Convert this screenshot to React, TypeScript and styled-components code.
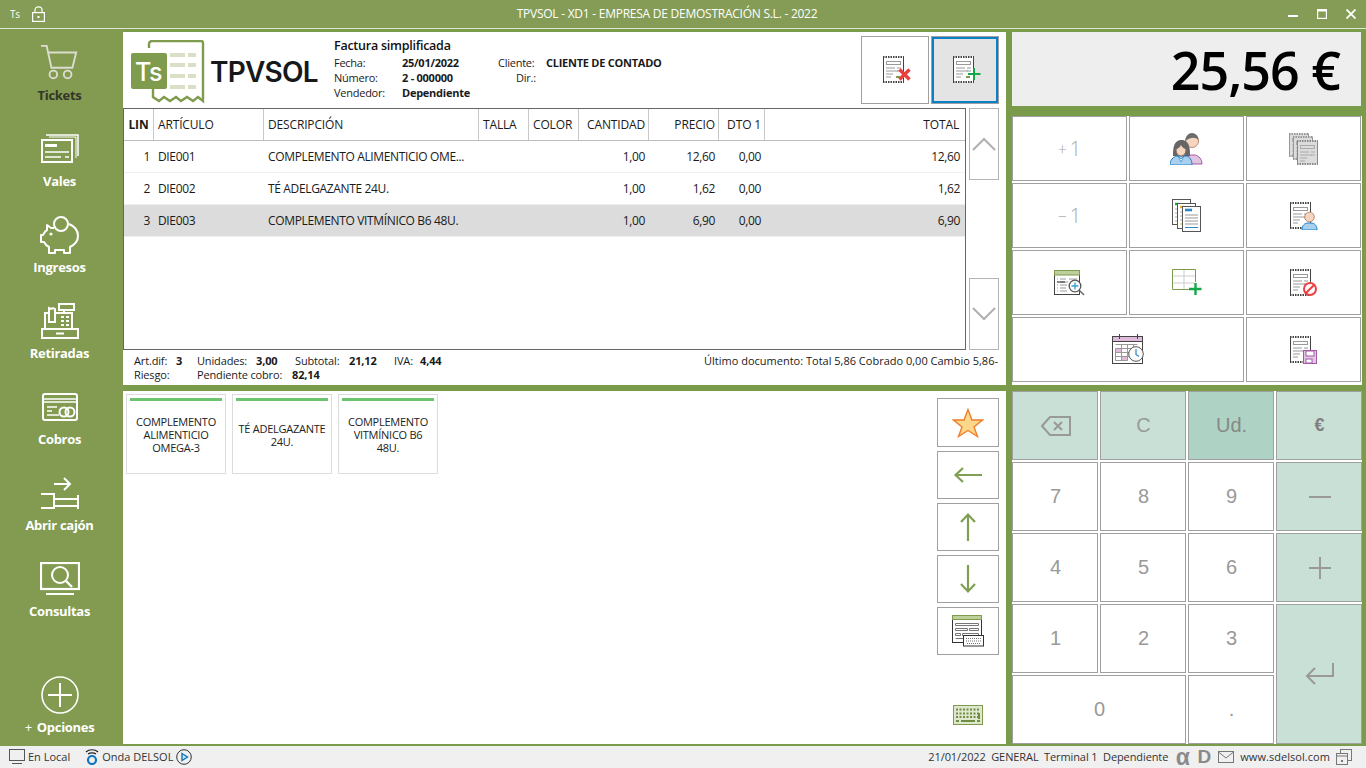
import React from "react";
import styled, { createGlobalStyle } from "styled-components";

const GREEN = "#7f9b4e";
const UI = `"Open Sans", "Noto Sans", sans-serif`;

const Global = createGlobalStyle`
  html, body { margin: 0; padding: 0; height: 100%; overflow: hidden; }
  body { font-family: ${UI}; font-size: 12px; letter-spacing: -0.35px; color: #1a1a1a; }
  * { box-sizing: border-box; }
`;

const Window = styled.div`
  width: 1366px; height: 768px; display: flex; flex-direction: column; background: #7a9b49;
`;
const TitleBar = styled.header`
  height: 29px; flex: none; display: flex; align-items: center; background: #849c55;
  border-bottom: 1px solid #dfe5d3; padding-bottom: 1px; color: #fff;
`;
const TitleLeft = styled.div`
  width: 50px; flex: none; display: flex; align-items: center; gap: 12px; padding-left: 10px;
  font-size: 10px;
`;
const TitleText = styled.div`flex: 1; text-align: center; font-size: 12px; letter-spacing: -0.25px;`;
const TitleRight = styled.div`
  width: 82px; flex: none; display: flex; align-items: center; gap: 19px; padding-left: 4px;
`;
const Body = styled.div`
  flex: 1; min-height: 0; display: grid; grid-template-columns: 123px 883px 356px;
  padding-right: 4px; background: #7a9b49;
`;
const Sidebar = styled.nav`
  display: flex; flex-direction: column; gap: 22px; padding: 9px 4px 12px 0; background: #829b50;
`;
const NavItem = styled.div<{ $last?: boolean }>`
  height: 64px; display: flex; flex-direction: column; align-items: center; flex: none;
  margin-top: ${p => (p.$last ? "auto" : "0")};
`;
const NavIcon = styled.div`height: 50px; display: flex; align-items: center; justify-content: center;`;
const NavLabel = styled.div<{ $active?: boolean }>`
  height: 14px; line-height: 14px; font-size: 13px; font-weight: 700; white-space: nowrap; letter-spacing: -0.3px;
  color: ${p => (p.$active ? "#33362a" : "#fff")};
`;
const PlusSmall = styled.span`font-weight: 400; margin-right: 5px;`;

const Center = styled.main`display: flex; flex-direction: column; gap: 6px; min-width: 0; padding: 3px 0 2px;`;
const TopPanel = styled.section`height: 353px; flex: none; background: #fff; display: flex; flex-direction: column;`;
const Header = styled.div`height: 76px; flex: none; display: flex; padding-left: 8px;`;
const LogoBox = styled.div`
  width: 186px; height: 64px; margin-top: 8px; flex: none; display: flex; align-items: center; position: relative;
`;
const LogoText = styled.span`
  position: absolute; left: 79px; top: 15px; font-family: Inter, sans-serif; font-weight: 600;
  font-size: 28px; line-height: 34px; letter-spacing: -0.8px; color: #17181a;
`;
const Info = styled.div`margin-left: 17px; padding-top: 6px; width: 380px;`;
const InfoTitle = styled.div`font-size: 12.5px; line-height: 16px; font-weight: 600; color: #111; margin-bottom: 1px; letter-spacing: -0.25px;`;
const InfoGrid = styled.div`
  display: grid; grid-template-columns: 68px 96px 48px 1fr; grid-auto-rows: 15px; font-size: 11px; line-height: 15px;
  letter-spacing: -0.25px;
`;
const InfoValue = styled.span`font-weight: 700;`;
const InfoDir = styled.span`padding-left: 18px;`;
const DocButtons = styled.div`margin-left: auto; display: flex; gap: 2px; padding: 4px 7px 0 0;`;
const DocButton = styled.button<{ $on?: boolean }>`
  width: 68px; height: 68px; padding: 0; display: flex; align-items: center; justify-content: center;
  background: ${p => (p.$on ? "#e4e4e4" : "#fff")}; border: 1px solid #a0a0a0;
  box-shadow: ${p => (p.$on ? "inset 0 0 0 2px #0a80c6" : "none")};
`;
const GridRow = styled.div`height: 242px; flex: none; display: flex;`;
const Table = styled.div`width: 843px; flex: none; border: 1px solid #666; display: flex; flex-direction: column;`;
const COLS = "30px 110px 215px 50px 50px 70px 70px 46px 1fr";
const THead = styled.div`
  display: grid; grid-template-columns: ${COLS}; height: 32px; flex: none; border-bottom: 1px solid #bdbdbd;
`;
const TH = styled.div<{ $right?: boolean; $bold?: boolean; $center?: boolean }>`
  border-right: 1px solid #c8c8c8; line-height: 31px; font-size: 12px; white-space: nowrap;
  padding: ${p => (p.$right ? "0 3px 0 0" : p.$center ? "0" : "0 0 0 4px")};
  text-align: ${p => (p.$right ? "right" : p.$center ? "center" : "left")};
  font-weight: ${p => (p.$bold ? 700 : 400)};
  letter-spacing: -0.15px;
  &:last-child { border-right: 0; padding-right: 6px; }
`;
const TRow = styled.div<{ $sel?: boolean }>`
  display: grid; grid-template-columns: ${COLS}; height: 32px; flex: none; border-bottom: 1px solid #efefef;
  background: ${p => (p.$sel ? "#dcdcdc" : "#fff")};
`;
const TD = styled.div<{ $right?: boolean }>`
  line-height: 31px; font-size: 12px; white-space: nowrap; overflow: hidden;
  padding: ${p => (p.$right ? "0 4px 0 0" : "0 0 0 4px")};
  text-align: ${p => (p.$right ? "right" : "left")};
  &:last-child { padding-right: 5px; }
`;
const ScrollCol = styled.div`
  width: 30px; margin-left: 3px; display: flex; flex-direction: column; justify-content: space-between;
`;
const ScrollBtn = styled.button`
  width: 30px; height: 72px; padding: 0; background: #fff; border: 1px solid #b4b4b4;
  display: flex; align-items: center; justify-content: center;
`;
const Foot = styled.div`flex: 1; position: relative; display: flex; padding: 4px 8px 0 11px; font-size: 11px; line-height: 14px; letter-spacing: -0.15px;`;
const FootStats = styled.div`display: flex; flex-direction: column;`;
const FootRow = styled.div`display: flex;`;
const Stat = styled.div<{ $w: number }>`width: ${p => p.$w}px; display: flex; white-space: nowrap;`;
const StatLabel = styled.span<{ $w: number }>`width: ${p => p.$w}px; flex: none;`;
const StatValue = styled.span`font-weight: 700;`;
const LastDoc = styled.div`margin-left: auto; white-space: nowrap; letter-spacing: 0;`;

const BottomPanel = styled.section`height: 353px; flex: none; background: #fff; display: flex;`;
const Cards = styled.div`flex: 1; display: flex; gap: 6px; padding: 3px 0 0 3px; align-items: flex-start;`;
const Card = styled.div`
  width: 100px; height: 80px; border: 1px solid #dcdcdc; padding: 3px; display: flex; flex-direction: column;
`;
const CardBar = styled.div`height: 3px; background: #6cc46f; flex: none;`;
const CardText = styled.div`
  flex: 1; display: flex; align-items: center; justify-content: center; text-align: center;
  font-size: 11px; line-height: 13px; padding-bottom: 2px; color: #222; letter-spacing: -0.25px;
`;
const Tools = styled.div`
  width: 62px; margin-right: 7px; flex: none; padding: 7px 0 19px; display: flex; flex-direction: column; gap: 4px; align-items: center;
`;
const ToolBtn = styled.button<{ $tall?: boolean }>`
  width: 62px; height: ${p => (p.$tall ? 49 : 48)}px; flex: none; padding: 0; background: #fff; border: 1px solid #a0a0a0;
  display: flex; align-items: center; justify-content: center;
`;
const KeyIcon = styled.div`margin-top: auto; display: flex;`;

const RightCol = styled.aside`display: flex; flex-direction: column; margin-left: 6px; padding: 3px 0 2px;`;
const Amount = styled.div`
  height: 74px; background: #eee; flex: none; width: 349px; text-align: right; padding-right: 21px;
  font-size: 52px; line-height: 76px; color: #000; font-weight: 600; letter-spacing: -1px;
`;
const Actions = styled.div`
  margin-top: 10px; height: 269px; background: #fff; display: grid; grid-template-columns: repeat(3, 115px);
  grid-auto-rows: 65px; gap: 2px; flex: none; align-content: start;
`;
const ActionBtn = styled.button<{ $span?: number }>`
  grid-column: span ${p => p.$span ?? 1}; padding: 0; background: #fff; border: 1px solid #a0a0a0;
  display: flex; align-items: center; justify-content: center;
`;
const ActionText = styled.span`
  font-family: ${UI}; font-size: 20px; line-height: 20px; color: #a8a8a8; letter-spacing: 0; font-weight: 300;
  display: flex; align-items: center;
`;
const ActionSign = styled.span`font-size: 16px; margin-right: 3px;`;
const Numpad = styled.div`
  margin-top: 6px; height: 353px; background: #fff; display: grid; grid-template-columns: repeat(4, 86px);
  grid-template-rows: repeat(5, 69px); gap: 2px; flex: none;
`;
const Key = styled.button<{ $tone?: "soft" | "strong"; $col?: number; $row?: number; $size?: number; $dark?: boolean }>`
  grid-column: span ${p => p.$col ?? 1}; grid-row: span ${p => p.$row ?? 1}; padding: 0 0 0 1px;
  border: 1px solid #a0a0a0; color: ${p => (p.$dark ? "#808080" : p.$tone === "strong" ? "#888" : "#999")};
  font-family: "Liberation Sans", Arial, sans-serif;
  font-size: ${p => p.$size ?? 20}px; font-weight: ${p => (p.$dark ? 700 : 400)};
  display: flex; align-items: center; justify-content: center;
  background: ${p => (p.$tone === "soft" ? "#c8e0d6" : p.$tone === "strong" ? "#aed3c4" : "#fff")};
`;
const StatusBar = styled.footer`
  height: 22px; flex: none; background: #f0f0f0; display: flex; align-items: center; font-size: 11px; color: #333;
  padding: 0 14px 1px 9px; letter-spacing: 0;
`;
const StatusGroup = styled.div<{ $gap?: number }>`display: flex; align-items: center; gap: ${p => p.$gap ?? 3}px; white-space: nowrap;`;
const StatusRight = styled(StatusGroup)`margin-left: auto;`;
const StatusDetails = styled.span`letter-spacing: -0.1px; margin-right: 1px;`;
const StatusLink = styled.span`letter-spacing: 0.05px;`;
const StatusSpacer = styled.span`width: 9px;`;
const Brand = styled.span<{ $wide?: boolean }>`
  font-weight: 700; font-size: ${p => (p.$wide ? 23 : 19)}px; line-height: 16px; color: #8a8a8a;
  width: ${p => (p.$wide ? 15 : 16)}px; text-align: center;
  font-family: "Liberation Sans", sans-serif;
`;

/* ---------- icons ---------- */
const W = "#fff";

const Cart = () => (
  <svg width="40" height="40" viewBox="0 0 42 42" fill="none" stroke="#dcdccf" strokeWidth="2">
    <path d="M1 3h6l5 23h22l4-16H9" />
    <circle cx="14" cy="33" r="4" />
    <circle cx="29" cy="33" r="4" />
  </svg>
);
const Vouchers = () => (
  <svg width="38" height="30" viewBox="0 0 38 30" fill="none" stroke={W} strokeWidth="2">
    <path d="M5 1h32v21" strokeWidth="1.5" />
    <path d="M8 3h27v21" strokeWidth="1" />
    <rect x="1" y="6" width="30" height="22" />
    <path d="M4 10h12v3H4z" fill={W} stroke="none" />
    <path d="M4 18h24M4 23h16M24 23h4" strokeWidth="1.5" />
  </svg>
);
const Piggy = () => (
  <svg width="40" height="40" viewBox="0 0 40 40" fill="none" stroke={W} strokeWidth="2" strokeLinejoin="round">
    <circle cx="21" cy="9" r="7" />
    <path d="M14 13H11L7 10v5c-2 1-3 3-4 5H1v7h3c1 2 3 4 5 5v6h6v-3h9v3h6v-6c4-2 8-6 8-11 0-6-4-10-9-12" />
    <circle cx="11" cy="19" r="1.6" fill={W} stroke="none" />
  </svg>
);
const Register = () => (
  <svg width="38" height="38" viewBox="0 0 38 38" fill="none" stroke={W} strokeWidth="2">
    <rect x="1" y="27" width="36" height="9" />
    <path d="M15 31.5h8" />
    <path d="M4 27V11h4M14 11h17v16" />
    <path d="M8 20V6l2 1 2-1 2 1v13z" />
    <rect x="18" y="2" width="15" height="6" />
    <path d="M23 8v3" />
    <path d="M20 15h3M25 15h3M20 19h3M25 19h3M20 23h3M25 23h3" strokeWidth="2" />
  </svg>
);
const CreditCard = () => (
  <svg width="36" height="28" viewBox="0 0 36 28" fill="none" stroke={W} strokeWidth="2">
    <rect x="1" y="1" width="34" height="26" rx="2" />
    <path d="M1 6h34M1 9h34" strokeWidth="1.4" />
    <path d="M5 14h10M5 18h5M5 22h12" strokeWidth="1.5" />
    <circle cx="22" cy="19" r="4.5" />
    <circle cx="28" cy="19" r="4.5" />
  </svg>
);
const Drawer = () => (
  <svg width="38" height="34" viewBox="0 0 38 34" fill="none" stroke={W} strokeWidth="2">
    <path d="M13 8h16M23 2l6 6-6 6" />
    <path d="M0 18h13v14H0" />
    <path d="M13 23h23M13 30h23M37 19v14" />
  </svg>
);
const Monitor = () => (
  <svg width="40" height="34" viewBox="0 0 40 34" fill="none" stroke={W} strokeWidth="2">
    <rect x="1" y="1" width="38" height="26" strokeWidth="2.2" />
    <circle cx="20" cy="13" r="8" />
    <path d="M26 19l6 6" strokeWidth="2.4" />
    <path d="M6 32h28" />
  </svg>
);
const PlusCircle = () => (
  <svg width="38" height="38" viewBox="0 0 38 38" fill="none" stroke={W} strokeWidth="1.6">
    <circle cx="19" cy="19" r="18" />
    <path d="M19 7v24M7 19h24" strokeWidth="2" />
  </svg>
);

const Logo = () => (
  <svg width="74" height="64" viewBox="0 0 74 64">
    <path d="M18 8V4a3 3 0 0 1 3-3h49a2 2 0 0 1 2 2v58l-5-4-5 4-6-4-6 4-5-4-6 4-6-4-5 4-6-4V48"
      fill="#fff" stroke={GREEN} strokeWidth="2.4" />
    <g fill="#d9e0c5">
      <rect x="39" y="13" width="15" height="4" /><rect x="57" y="13" width="8" height="4" />
      <rect x="39" y="23" width="15" height="4" /><rect x="57" y="23" width="8" height="4" />
      <rect x="39" y="34" width="15" height="4" /><rect x="57" y="34" width="8" height="4" />
      <rect x="39" y="45" width="15" height="4" /><rect x="57" y="45" width="8" height="4" />
    </g>
    <rect x="0" y="13" width="36" height="36" rx="2" fill={GREEN} />
    <text x="17.500" y="41" textAnchor="middle" fill="#fff" fontFamily="Inter, sans-serif" fontWeight="500" fontSize="25">Ts</text>
  </svg>
);

const Lock = () => (
  <svg width="13" height="16" viewBox="0 0 13 16" fill="none" stroke={W} strokeWidth="1.2">
    <rect x="0.6" y="6.6" width="11.8" height="8.8" />
    <path d="M3 6.5V3.8C3 2 4.5 0.8 6.500 0.8S10 2 10 3.800V6.500" />
    <rect x="5.500" y="10" width="2" height="2" fill={W} stroke="none" />
  </svg>
);

/* Receipt sheet, shared by many buttons */
const Sheet = ({ x = 0, y = 0, w = 21, h = 27, fill = "#fff", stroke = "#444", ink = "#999" }:
  { x?: number; y?: number; w?: number; h?: number; fill?: string; stroke?: string; ink?: string }) => (
  <g transform={`translate(${x} ${y})`}>
    <rect x="0.500" y="0.500" width={w - 1} height={h - 1} fill={fill} />
    <path d={`M0.500 0.500V${h - 0.5}M${w - 0.5} 0.500V${h - 0.5}`} stroke={stroke} strokeWidth="1" />
    <path d={`M0 1H${w}M0 ${h - 1}H${w}`} stroke={stroke} strokeWidth="2" strokeDasharray="1.500 1" />
    <rect x="3.500" y="5.500" width={w - 7} height="3" fill="none" stroke={ink} />
    <path d={`M3 12H${w - 9}M3 15H${w - 6}M3 18H${w - 11}M3 21H${w - 13}`} stroke={ink} strokeWidth="1" />
    <path d={`M${w - 7} 12H${w - 3}M${w - 7} 15H${w - 3}`} stroke={ink} strokeWidth="1" />
  </g>
);

const ReceiptCancel = () => (
  <svg width="32" height="28" viewBox="-4 0 32 28">
    <Sheet />
    <path d="M13 21h4" stroke={GREEN} strokeWidth="2" />
    <path d="M16.500 13.500l10 10M26.500 13.500l-10 10" stroke="#e8403e" strokeWidth="3.400" />
  </svg>
);
const ReceiptAdd = () => (
  <svg width="32" height="28" viewBox="-4 0 32 28">
    <Sheet />
    <path d="M13 21h4" stroke={GREEN} strokeWidth="2" />
    <path d="M21 12v12M15 18h12.500" stroke="#13a84a" strokeWidth="2" />
  </svg>
);
const People = () => (
  <svg width="34" height="33" viewBox="0 0 34 33">
    <path d="M15 32c0-5 3-8 6-9h4c4 1 7 4 7 9z" fill="#e0c4e0" stroke="#a45aa8" />
    <circle cx="22" cy="9" r="6.500" fill="#f5d5bf" stroke="#bb8a70" />
    <path d="M15.500 9c0-5 3-8 6.500-8s6.500 3 6.500 7c-3-3-8-3-13 1z" fill="#6b6b6b" />
    <path d="M3 24c0-6 0-16 8.500-16S20 18 20 24z" fill="#666" />
    <path d="M0 33c0-5 3-8 7-9h9c4 1 6 4 6 9z" fill="#a9d1ef" stroke="#1f81c4" />
    <path d="M8 24l3 3 3-3-3 6z" fill="#fff" stroke="#1f81c4" strokeWidth=".7" />
    <ellipse cx="11" cy="18" rx="5" ry="6" fill="#f5d5bf" stroke="#8a6a58" />
    <path d="M6 17c2 0 4-2 5-4 1 2 3 4 5 4l0-4-5-3-5 3z" fill="#666" />
  </svg>
);
const StackedReceipts = () => (
  <svg width="30" height="32" viewBox="0 0 30 32">
    <Sheet w={20} h={24} fill="#dcdcdc" stroke="#999" ink="#aaa" />
    <Sheet x={4} y={3} w={20} h={24} fill="#dcdcdc" stroke="#999" ink="#aaa" />
    <Sheet x={8} y={7} w={21} h={25} fill="#dcdcdc" stroke="#888" ink="#aaa" />
  </svg>
);
const Documents = () => (
  <svg width="29" height="33" viewBox="0 0 29 33">
    <rect x=".5" y=".5" width="18" height="25" fill="#fff" stroke="#555" />
    <path d="M3 5h4" stroke="#1fa04a" strokeWidth="2.400" />
    <path d="M3 10h3M3 14h3M3 18h3M3 22h3" stroke="#aaa" />
    <rect x="5.500" y="4.500" width="18" height="25" fill="#fff" stroke="#555" />
    <path d="M8 8h4" stroke="#f0a820" strokeWidth="2.400" />
    <path d="M8 13h2M8 17h2M8 21h2" stroke="#aaa" /><path d="M8 25h2" stroke="#f0a820" />
    <rect x="10.500" y="7.500" width="18" height="25" fill="#fff" stroke="#555" />
    <path d="M13 11h7" stroke="#2a86c8" strokeWidth="2.600" />
    <path d="M13 16h13M13 19h13M13 22h13M13 25h13" stroke="#999" />
    <path d="M13 28.500h13" stroke="#2a86c8" />
  </svg>
);
const ReceiptUser = () => (
  <svg width="28" height="28" viewBox="0 0 28 28">
    <Sheet />
    <path d="M12 28c0-5 3-7 6-7h3c3 0 6 2 6 7z" fill="#a9d1ef" stroke="#1f81c4" />
    <circle cx="19.500" cy="15" r="4.800" fill="#f5d5bf" stroke="#bb8a70" />
  </svg>
);
const TableSearch = () => (
  <svg width="31" height="26" viewBox="0 0 31 26" fill="none">
    <rect x=".5" y=".5" width="25" height="24" fill="#fff" stroke="#444" />
    <rect x=".5" y=".5" width="25" height="4.500" fill="#bdd09b" stroke={GREEN} />
    <path d="M3 9h1M6 9h6M15 9h8M3 12h1M6 12h8M3 15h1M6 15h7M3 18h1M6 18h6M3 21h1M6 21h7" stroke="#999" />
    <path d="M3 12h8" stroke="#222" />
    <circle cx="21" cy="16" r="5.800" fill="#fff" stroke="#555" strokeWidth="1.300" />
    <path d="M21 12.500v7M17.500 16h7" stroke="#3c9fd8" strokeWidth="1.400" />
    <path d="M25.500 20.500l4.500 4.500" stroke="#666" strokeWidth="1.400" />
  </svg>
);
const TableAdd = () => (
  <svg width="30" height="27" viewBox="0 0 30 27" fill="none">
    <path d="M23.500 13V.5H.5v20H17" stroke={GREEN} />
    <path d="M1 7h22M1 14h22M12 1v19" stroke="#ccc" />
    <path d="M23.500 14v12M17 20h12.500" stroke="#13a84a" strokeWidth="2.400" />
  </svg>
);
const ReceiptBlocked = () => (
  <svg width="28" height="28" viewBox="0 0 28 28">
    <Sheet />
    <circle cx="20" cy="20" r="6" fill="#fff" stroke="#ee3f42" strokeWidth="2" />
    <path d="M16 24l8-8" stroke="#ee3f42" strokeWidth="2" />
  </svg>
);
const ReceiptSave = () => (
  <svg width="28" height="28" viewBox="0 0 28 28">
    <Sheet />
    <rect x="13.500" y="14.500" width="13" height="13" fill="#e3c8e3" stroke="#a45aa8" />
    <rect x="16" y="15" width="8" height="5" fill="#fff" stroke="#a45aa8" />
    <rect x="16" y="23" width="6" height="4" fill="#fff" stroke="#a45aa8" />
  </svg>
);
const CalendarClock = () => (
  <svg width="32" height="31" viewBox="0 0 32 31" fill="none">
    <rect x=".5" y="2.500" width="30" height="27" fill="#fff" stroke="#444" />
    <rect x=".5" y="2.500" width="30" height="5" fill="#dfbcdc" stroke="#444" />
    <path d="M7.500 0v5M25.500 0v5" stroke="#444" />
    <rect x="3.500" y="14.500" width="6" height="4" fill="#dfbcdc" />
    <rect x="9.500" y="22.500" width="6" height="4" fill="#dfbcdc" />
    <path d="M3.500 10.500h22M3.500 14.500h22M3.500 18.500h18M3.500 22.500h18M3.500 26.500h12M3.500 14.500v12M9.500 10.500v16M15.500 10.500v16M21.500 10.500v6" stroke="#999" />
    <circle cx="24" cy="20" r="7.300" fill="#fff" stroke="#555" />
    <path d="M24 15v5.500l3 2" stroke="#2a86c8" strokeWidth="1.200" />
  </svg>
);

const Star = () => (
  <svg width="32" height="30" viewBox="0 0 32 30">
    <path d="M16 1.500l4 10.500h10.500l-8.500 7 3.500 9.500-9.500-6-9.500 6 3.500-9.500-8.500-7H12z" fill="#fbd78a" stroke="#ee7d2d" strokeWidth="1.400" />
  </svg>
);
const ArrowLeft = () => (
  <svg width="30" height="18" viewBox="0 0 30 18" fill="none" stroke="#7fa053" strokeWidth="2.200">
    <path d="M29 9H3M10 2L2.500 9l7.500 7" />
  </svg>
);
const ArrowUp = () => (
  <svg width="18" height="30" viewBox="0 0 18 30" fill="none" stroke="#7fa053" strokeWidth="2.200">
    <path d="M9 29V3M2 10l7-7.500L16 10" />
  </svg>
);
const ArrowDown = () => (
  <svg width="18" height="30" viewBox="0 0 18 30" fill="none" stroke="#7fa053" strokeWidth="2.200">
    <path d="M9 1v26M2 20l7 7.500 7-7.500" />
  </svg>
);
const FormKeyboard = () => (
  <svg width="32" height="32" viewBox="0 0 32 32" fill="none">
    <rect x=".5" y=".5" width="29" height="27" fill="#fff" stroke="#333" />
    <rect x=".5" y=".5" width="29" height="4" fill="#bdd09b" stroke={GREEN} />
    <path d="M3.500 8.500h23v2h-23zM3.500 13.500h12v2h-12zM17.500 13.500h9v2h-9zM3.500 18.500h5v2h-5zM10.500 18.500h16v2h-16zM3.500 23.500h8" stroke="#777" />
    <rect x="11.500" y="20.500" width="20" height="10.500" fill="#fff" stroke="#333" />
    <path d="M14 23.500h15M14 26h15M15 28.500h13" stroke="#777" strokeDasharray="1 1" />
  </svg>
);
const GreenKeyboard = () => (
  <svg width="30" height="20" viewBox="0 0 30 20">
    <rect x=".5" y=".5" width="29" height="19" fill="#dfe8cd" stroke={GREEN} />
    <path d="M3 4.500h24M3 8.500h24M3 12h22" stroke="#6f8d44" strokeWidth="2" strokeDasharray="2 1.500" />
    <path d="M8 16h14M3 16h3M24 16h3M26 8v6" stroke="#6f8d44" strokeWidth="2" />
  </svg>
);
const Chevron = ({ up }: { up?: boolean }) => (
  <svg width="24" height="14" viewBox="0 0 24 14" fill="none" stroke="#b0b0b0" strokeWidth="2">
    <path d={up ? "M1 13L12 2l11 11" : "M1 1l11 11L23 1"} />
  </svg>
);
const Backspace = () => (
  <svg width="30" height="20" viewBox="0 0 30 20" fill="none" stroke="#999" strokeWidth="2">
    <path d="M29 1H9L1 10l8 9h20z" />
    <path d="M13 6l8 8M21 6l-8 8" />
  </svg>
);
const Enter = () => (
  <svg width="30" height="22" viewBox="0 0 30 22" fill="none" stroke="#999" strokeWidth="2">
    <path d="M28 0v13H2M10 5l-8 8 8 8" />
  </svg>
);
const Line = ({ plus }: { plus?: boolean }) => (
  <svg width="22" height="22" viewBox="0 0 22 22" fill="none" stroke="#999" strokeWidth="2">
    <path d={plus ? "M0 11h22M11 0v22" : "M0 11h22"} />
  </svg>
);
const ScreenSmall = () => (
  <svg width="16" height="15" viewBox="0 0 16 15" fill="none" stroke="#555">
    <rect x=".5" y=".5" width="15" height="11" />
    <path d="M3 14.500h10" />
  </svg>
);
const Wave = () => (
  <svg width="14" height="17" viewBox="0 0 14 17" fill="none">
    <path d="M1 4c3-3 9-3 12 0M3 6c2-1.500 6-1.500 8 0" stroke="#222" strokeWidth="1.200" />
    <circle cx="7" cy="12" r="4" stroke="#1274bb" strokeWidth="2.200" />
  </svg>
);
const Play = () => (
  <svg width="16" height="16" viewBox="0 0 16 16" fill="none">
    <circle cx="8" cy="8" r="7.300" stroke="#333" />
    <path d="M6 4.500L11.500 8 6 11.500z" stroke="#1274bb" strokeWidth="1.400" fill="#cfe5f5" />
  </svg>
);
const Envelope = () => (
  <svg width="16" height="12" viewBox="0 0 16 12" fill="none" stroke="#777">
    <rect x=".5" y=".5" width="15" height="11" />
    <path d="M.5 1L8 7l7.500-6" />
  </svg>
);
const Windows = () => (
  <svg width="16" height="16" viewBox="0 0 16 16" fill="none" stroke="#777">
    <rect x="4.500" y=".5" width="11" height="11" />
    <rect x=".5" y="4.500" width="11" height="11" fill="#f0f0f0" />
    <path d="M.5 7h11" />
    <rect x="5" y="11" width="2" height="2" fill="#777" stroke="none" />
  </svg>
);

/* ---------- data ---------- */
const NAV: { label: string; icon: React.ReactNode; active?: boolean }[] = [
  { label: "Tickets", icon: <Cart />, active: true },
  { label: "Vales", icon: <Vouchers /> },
  { label: "Ingresos", icon: <Piggy /> },
  { label: "Retiradas", icon: <Register /> },
  { label: "Cobros", icon: <CreditCard /> },
  { label: "Abrir cajón", icon: <Drawer /> },
  { label: "Consultas", icon: <Monitor /> },
];
const ROWS = [
  ["1", "DIE001", "COMPLEMENTO ALIMENTICIO OME...", "1,00", "12,60", "0,00", "12,60"],
  ["2", "DIE002", "TÉ ADELGAZANTE 24U.", "1,00", "1,62", "0,00", "1,62"],
  ["3", "DIE003", "COMPLEMENTO VITMÍNICO B6 48U.", "1,00", "6,90", "0,00", "6,90"],
];
const CARDS = ["COMPLEMENTO ALIMENTICIO OMEGA-3", "TÉ ADELGAZANTE 24U.", "COMPLEMENTO VITMÍNICO B6 48U."];

export default function App() {
  return (
    <Window>
      <Global />
      <TitleBar>
        <TitleLeft><span>Ts</span><Lock /></TitleLeft>
        <TitleText>TPVSOL - XD1 - EMPRESA DE DEMOSTRACIÓN S.L. - 2022</TitleText>
        <TitleRight>
          <svg width="10" height="10" viewBox="0 0 10 10" fill="none" stroke={W} strokeWidth="2"><path d="M0 7h10" /></svg>
          <svg width="10" height="10" viewBox="0 0 10 10" fill="none" stroke={W} strokeWidth="1.200"><rect x=".6" y=".6" width="8.800" height="8.800" /><path d="M0 1.500h10" strokeWidth="2" /></svg>
          <svg width="10" height="10" viewBox="0 0 10 10" fill="none" stroke={W} strokeWidth="1.800"><path d="M.5.5l9 9M9.500.5l-9 9" /></svg>
        </TitleRight>
      </TitleBar>
      <Body>
        <Sidebar>
          {NAV.map(n => (
            <NavItem key={n.label}>
              <NavIcon>{n.icon}</NavIcon>
              <NavLabel $active={n.active}>{n.label}</NavLabel>
            </NavItem>
          ))}
          <NavItem $last>
            <NavIcon><PlusCircle /></NavIcon>
            <NavLabel><PlusSmall>+</PlusSmall>Opciones</NavLabel>
          </NavItem>
        </Sidebar>
        <Center>
          <TopPanel>
            <Header>
              <LogoBox><Logo /><LogoText>TPVSOL</LogoText></LogoBox>
              <Info>
                <InfoTitle>Factura simplificada</InfoTitle>
                <InfoGrid>
                  <span>Fecha:</span><InfoValue>25/01/2022</InfoValue><span>Cliente:</span><InfoValue>CLIENTE DE CONTADO</InfoValue>
                  <span>Número:</span><InfoValue>2 - 000000</InfoValue><InfoDir>Dir.:</InfoDir><span />
                  <span>Vendedor:</span><InfoValue>Dependiente</InfoValue>
                </InfoGrid>
              </Info>
              <DocButtons>
                <DocButton><ReceiptCancel /></DocButton>
                <DocButton $on><ReceiptAdd /></DocButton>
              </DocButtons>
            </Header>
            <GridRow>
              <Table>
                <THead>
                  <TH $bold $center>LIN</TH><TH>ARTÍCULO</TH><TH>DESCRIPCIÓN</TH><TH>TALLA</TH><TH>COLOR</TH>
                  <TH $right>CANTIDAD</TH><TH $right>PRECIO</TH><TH $right>DTO 1</TH><TH $right>TOTAL</TH>
                </THead>
                {ROWS.map((r, i) => (
                  <TRow key={r[0]} $sel={i === 2}>
                    <TD $right>{r[0]}</TD><TD>{r[1]}</TD><TD>{r[2]}</TD><TD /><TD />
                    <TD $right>{r[3]}</TD><TD $right>{r[4]}</TD><TD $right>{r[5]}</TD><TD $right>{r[6]}</TD>
                  </TRow>
                ))}
              </Table>
              <ScrollCol>
                <ScrollBtn><Chevron up /></ScrollBtn>
                <ScrollBtn><Chevron /></ScrollBtn>
              </ScrollCol>
            </GridRow>
            <Foot>
              <FootStats>
                <FootRow>
                  <Stat $w={63}><StatLabel $w={42}>Art.dif:</StatLabel><StatValue>3</StatValue></Stat>
                  <Stat $w={98}><StatLabel $w={59}>Unidades:</StatLabel><StatValue>3,00</StatValue></Stat>
                  <Stat $w={99}><StatLabel $w={54}>Subtotal:</StatLabel><StatValue>21,12</StatValue></Stat>
                  <Stat $w={60}><StatLabel $w={26}>IVA:</StatLabel><StatValue>4,44</StatValue></Stat>
                </FootRow>
                <FootRow>
                  <Stat $w={63}>Riesgo:</Stat>
                  <Stat $w={200}><StatLabel $w={95}>Pendiente cobro:</StatLabel><StatValue>82,14</StatValue></Stat>
                </FootRow>
              </FootStats>
              <LastDoc>Último documento: Total 5,86 Cobrado 0,00 Cambio 5,86-</LastDoc>
            </Foot>
          </TopPanel>
          <BottomPanel>
            <Cards>
              {CARDS.map(c => (
                <Card key={c}><CardBar /><CardText>{c}</CardText></Card>
              ))}
            </Cards>
            <Tools>
              <ToolBtn $tall><Star /></ToolBtn>
              <ToolBtn><ArrowLeft /></ToolBtn>
              <ToolBtn><ArrowUp /></ToolBtn>
              <ToolBtn><ArrowDown /></ToolBtn>
              <ToolBtn><FormKeyboard /></ToolBtn>
              <KeyIcon><GreenKeyboard /></KeyIcon>
            </Tools>
          </BottomPanel>
        </Center>
        <RightCol>
          <Amount>25,56 €</Amount>
          <Actions>
            <ActionBtn><ActionText><ActionSign>+</ActionSign>1</ActionText></ActionBtn>
            <ActionBtn><People /></ActionBtn>
            <ActionBtn><StackedReceipts /></ActionBtn>
            <ActionBtn><ActionText><ActionSign>−</ActionSign>1</ActionText></ActionBtn>
            <ActionBtn><Documents /></ActionBtn>
            <ActionBtn><ReceiptUser /></ActionBtn>
            <ActionBtn><TableSearch /></ActionBtn>
            <ActionBtn><TableAdd /></ActionBtn>
            <ActionBtn><ReceiptBlocked /></ActionBtn>
            <ActionBtn $span={2}><CalendarClock /></ActionBtn>
            <ActionBtn><ReceiptSave /></ActionBtn>
          </Actions>
          <Numpad>
            <Key $tone="soft"><Backspace /></Key>
            <Key $tone="soft">C</Key>
            <Key $tone="strong">Ud.</Key>
            <Key $tone="soft" $size={18} $dark>€</Key>
            <Key>7</Key><Key>8</Key><Key>9</Key>
            <Key $tone="soft"><Line /></Key>
            <Key>4</Key><Key>5</Key><Key>6</Key>
            <Key $tone="soft"><Line plus /></Key>
            <Key>1</Key><Key>2</Key><Key>3</Key>
            <Key $tone="soft" $row={2}><Enter /></Key>
            <Key $col={2}>0</Key>
            <Key>.</Key>
          </Numpad>
        </RightCol>
      </Body>
      <StatusBar>
        <StatusGroup>
          <ScreenSmall /><span>En Local</span>
          <StatusSpacer />
          <Wave /><span>Onda DELSOL</span><Play />
        </StatusGroup>
        <StatusRight $gap={6}>
          <StatusDetails>21/01/2022&nbsp; GENERAL&nbsp; Terminal 1&nbsp; Dependiente</StatusDetails>
          <Brand $wide>α</Brand><Brand>D</Brand><Envelope /><StatusLink>www.sdelsol.com</StatusLink><Windows />
        </StatusRight>
      </StatusBar>
    </Window>
  );
}
